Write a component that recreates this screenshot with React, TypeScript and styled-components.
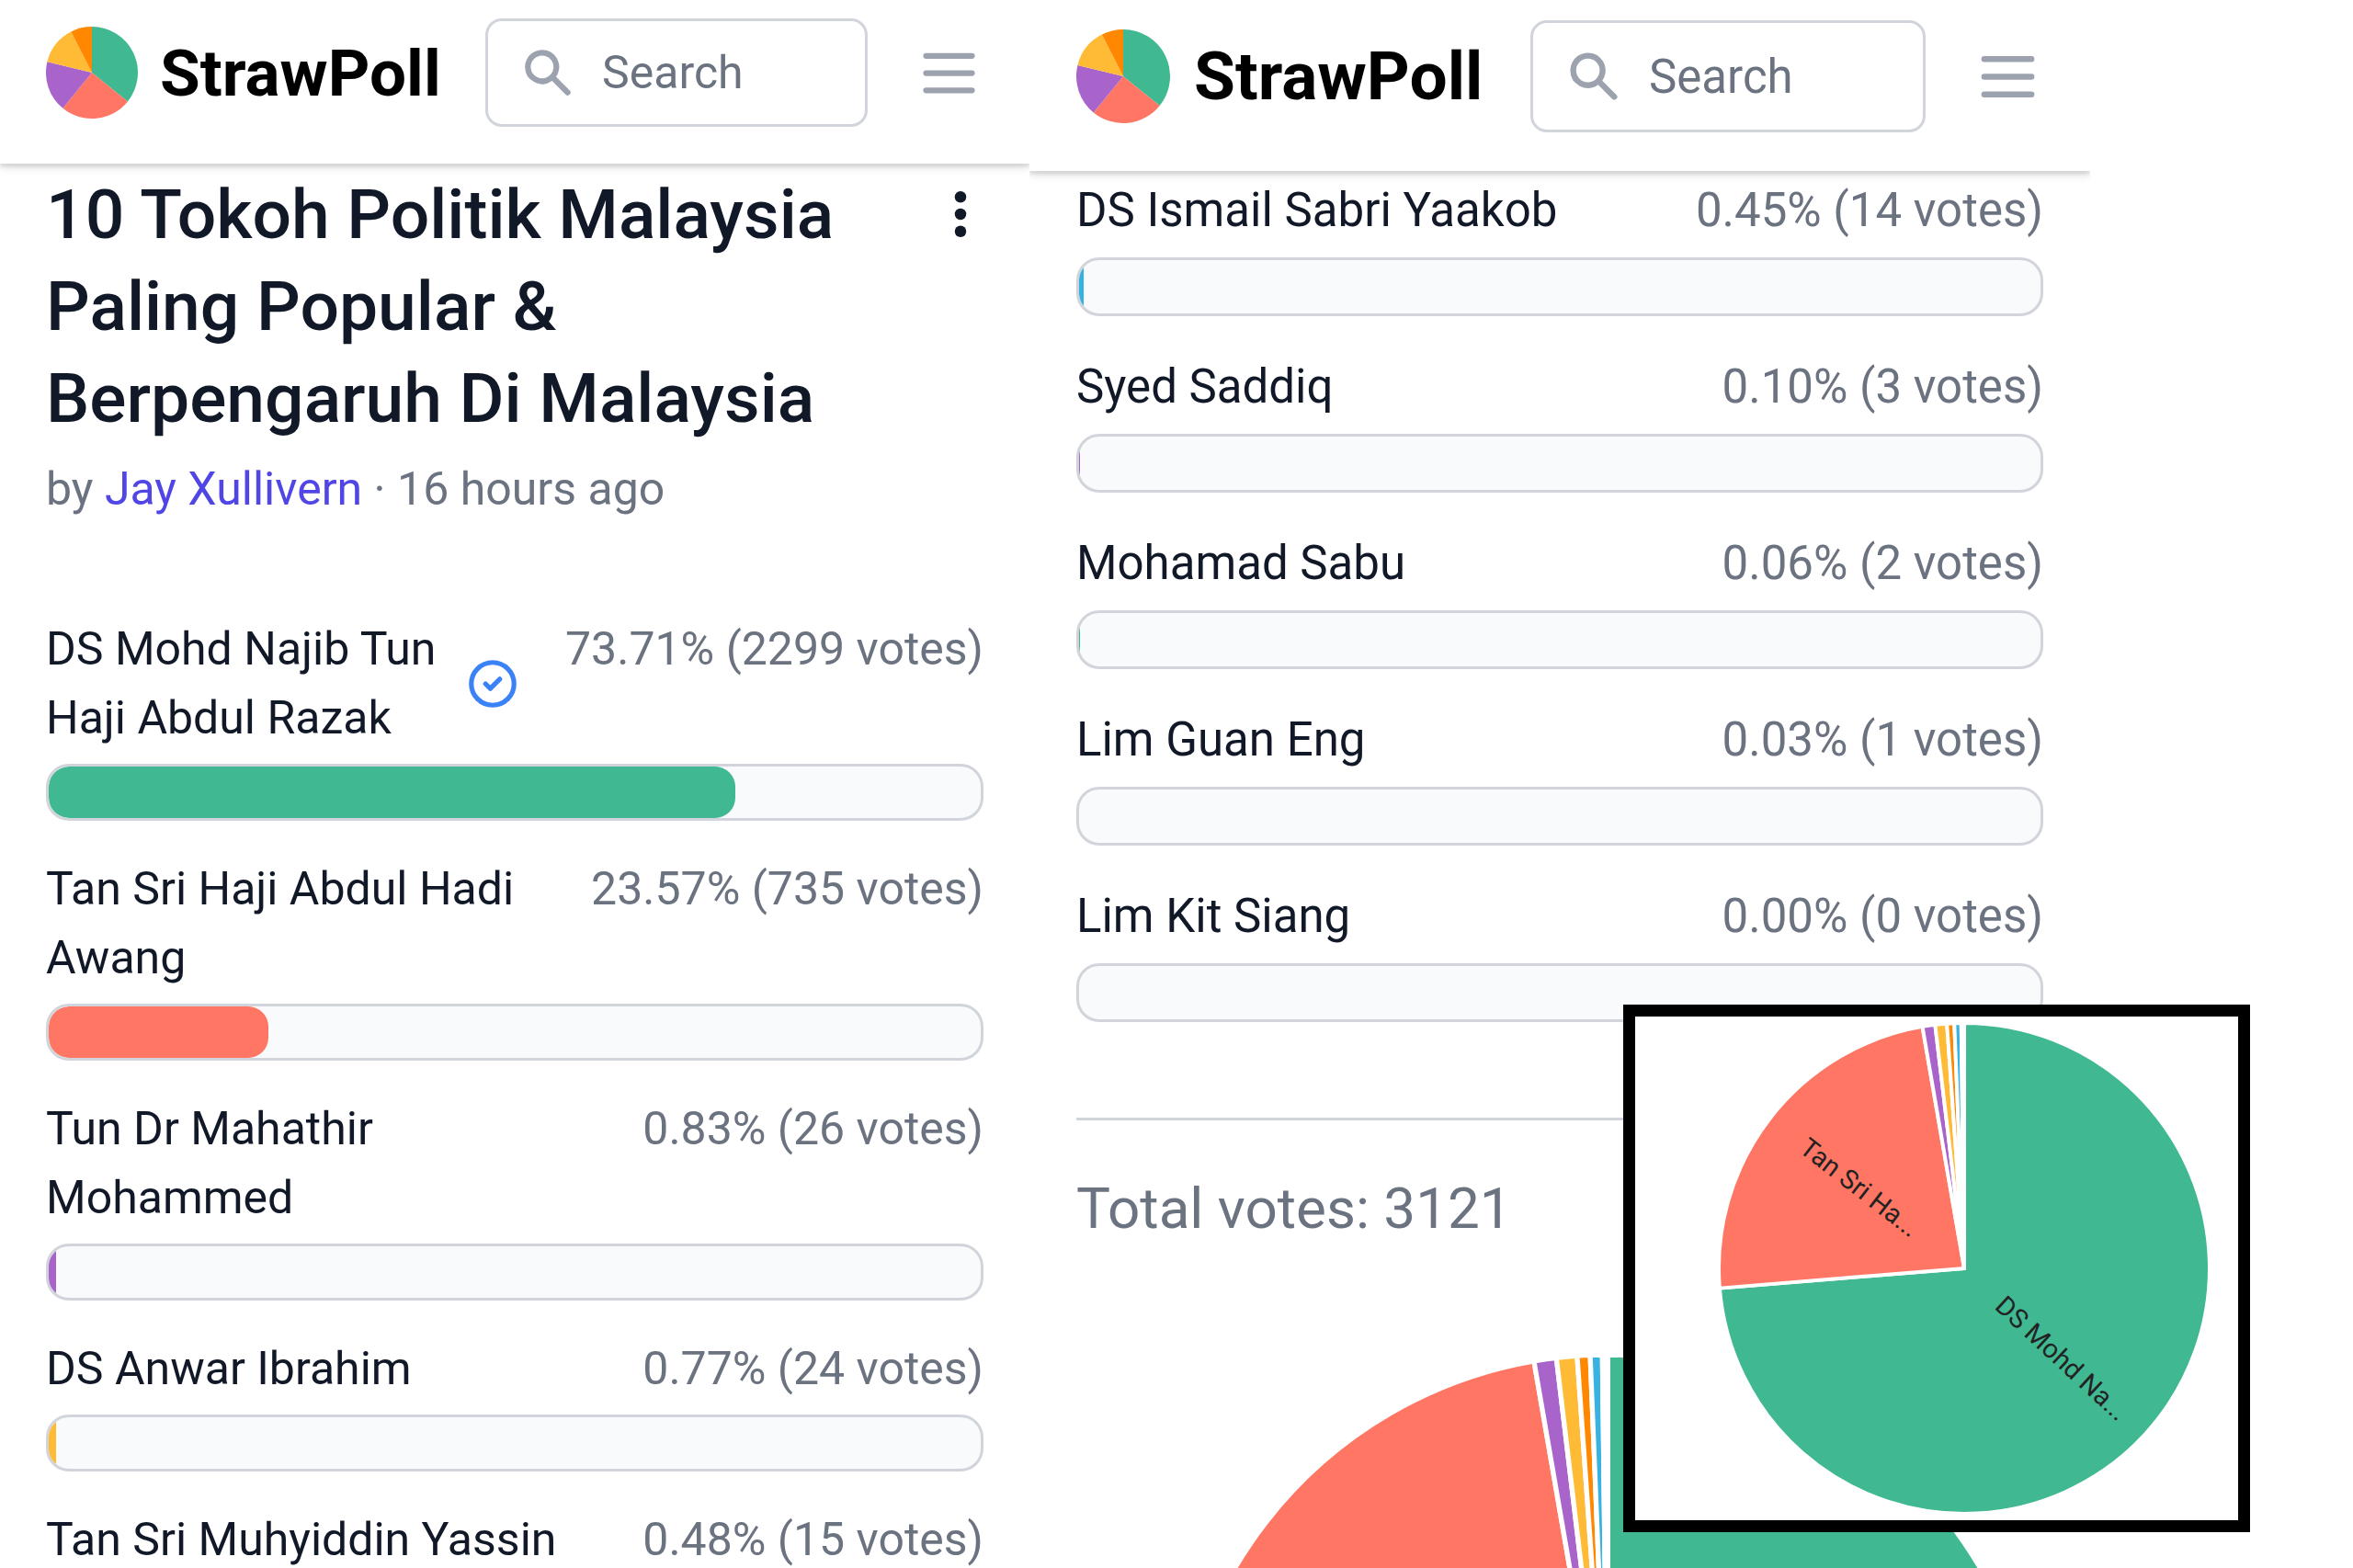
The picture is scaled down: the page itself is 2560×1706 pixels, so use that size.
import React from "react";
import styled, { createGlobalStyle, ThemeProvider } from "styled-components";

const GlobalStyle = createGlobalStyle`
  *, *::before, *::after { box-sizing: border-box; }
  body {
    margin: 0;
    background: #ffffff;
    font-family: Roboto, "Liberation Sans", sans-serif;
    color: #111827;
  }
  h1, p, ul { margin: 0; padding: 0; }
`;

const small = {
  text: 50, line: 75, brand: 71, brandGap: 24, logo: 100, pad: 50, headerTop: 20, headerBottom: 40,
  search: 416, searchHeight: 118, icon: 62, menu: 75, bar: 62, barGap: 12, rowGap: 37, contentTop: 5,
};
const large = {
  text: 51, line: 77, brand: 73, brandGap: 26, logo: 102, pad: 51, headerTop: 22, headerBottom: 42,
  search: 430, searchHeight: 122, icon: 64, menu: 77, bar: 64, barGap: 13, rowGap: 38, contentTop: 4,
};
type Sizes = typeof small;
type T = { theme: any };
const px = (key: keyof Sizes) => ({ theme }: T) => `${theme[key]}px`;

const Page = styled.div`
  position: relative;
  display: grid;
  grid-template-columns: 1120fr 1154fr 286fr;
  height: 100vh;
  overflow: hidden;
`;
const Screen = styled.section`
  min-width: 0;
  overflow: hidden;
`;
const Header = styled.header`
  display: flex;
  align-items: center;
  padding: ${px("headerTop")} ${px("pad")} ${px("headerBottom")};
  box-shadow: 0 4px 3px rgba(0, 0, 0, 0.08), 0 4px 10px rgba(0, 0, 0, 0.12);
`;
const Brand = styled.a`
  display: flex;
  align-items: center;
  gap: ${px("brandGap")};
  font-size: ${px("brand")};
  font-weight: 700;
  line-height: 1;
  color: #000000;
  text-decoration: none;
`;
const LogoMark = styled.svg`
  width: ${px("logo")};
  height: ${px("logo")};
`;
const SearchBox = styled.label`
  display: flex;
  align-items: center;
  gap: 28px;
  width: ${px("search")};
  height: ${px("searchHeight")};
  margin-left: auto;
  padding: 0 34px;
  border: 3px solid #d1d5db;
  border-radius: 18px;
`;
const SearchIcon = styled.svg`
  flex: none;
  width: ${px("icon")};
  height: ${px("icon")};
  fill: #9ca3af;
`;
const SearchInput = styled.input`
  flex: 1;
  min-width: 0;
  padding: 0;
  border: 0;
  outline: 0;
  background: transparent;
  font: inherit;
  font-size: ${px("text")};
  &::placeholder { color: #6b7280; opacity: 1; }
`;
const IconButton = styled.button`
  display: flex;
  padding: 0;
  border: 0;
  background: transparent;
  color: #111827;
`;
const MenuButton = styled(IconButton)`
  margin-left: 51px;
  color: #9ca3af;
`;
const MenuIcon = styled.svg`
  width: ${px("menu")};
  height: ${px("menu")};
`;
const Content = styled.main`
  padding: ${px("contentTop")} ${px("pad")} 0;
`;
const TitleRow = styled.div`
  display: flex;
  align-items: flex-start;
  gap: 50px;
`;
const Title = styled.h1`
  flex: 1;
  font-size: 75px;
  line-height: 100px;
  font-weight: 500;
`;
const MoreButton = styled(IconButton)`
  padding: 25px 0;
`;
const Byline = styled.p`
  margin: 12px 0 99px;
  font-size: ${px("text")};
  line-height: ${px("line")};
  color: #6b7280;
`;
const Author = styled.a`
  color: #4f46e5;
  text-decoration: none;
`;
const Results = styled.ul`
  display: flex;
  flex-direction: column;
  gap: ${px("rowGap")};
  list-style: none;
`;
const Result = styled.li`
  display: flex;
  flex-direction: column;
  gap: ${px("barGap")};
`;
const ResultHead = styled.div`
  display: flex;
  justify-content: space-between;
  gap: 48px;
  font-size: ${px("text")};
  line-height: ${px("line")};
`;
const Choice = styled.div`
  display: flex;
  align-items: center;
  gap: 25px;
`;
const Votes = styled.span`
  flex: none;
  color: #6b7280;
`;
const Track = styled.div`
  height: ${px("bar")};
  overflow: hidden;
  border: 3px solid #d1d5db;
  border-radius: 25px;
  background: #f9fafb;
`;
const Fill = styled.div<{ $color: string; $rounded: boolean }>`
  height: 100%;
  border-radius: ${(p) => (p.$rounded ? "22px" : "0")};
  background: ${(p) => p.$color};
`;
const Divider = styled.hr`
  height: 3px;
  margin: 104px 0 51px;
  border: 0;
  background: #d1d5db;
`;
const Total = styled.p`
  font-size: 62px;
  line-height: 90px;
  color: #6b7280;
`;
const ChartArea = styled.div`
  display: flex;
  justify-content: flex-end;
  margin-top: 114px;
  padding-right: 4px;
`;
const ChartInset = styled.figure`
  position: absolute;
  top: 1093px;
  left: 69%;
  display: flex;
  justify-content: center;
  width: 682px;
  height: 574px;
  margin: 0;
  padding: 7px 0 0 60px;
  border: 13px solid #000000;
  background: #ffffff;
`;
const PieLabel = styled.text`
  font-size: 29px;
  fill: #222222;
`;

const colors = ["#40b892", "#ff7664", "#a864cb", "#ffbb36", "#ff8800", "#38b2e0", "#a864cb", "#40b892", "#ff7664", "#ffbb36"];
const counts = [2299, 735, 26, 24, 15, 14, 3, 2, 1, 0];

function point(turn: number, r: number) {
  const a = turn * 2 * Math.PI;
  return [r * Math.sin(a), -r * Math.cos(a)];
}
function wedge(from: number, to: number, r: number) {
  const [x1, y1] = point(from, r);
  const [x2, y2] = point(to, r);
  return `M0 0L${x1} ${y1}A${r} ${r} 0 ${to - from > 0.5 ? 1 : 0} 1 ${x2} ${y2}Z`;
}

function Pie({ size, gap, labels = [] }: { size: number; gap: number; labels?: string[] }) {
  const total = counts.reduce((a, b) => a + b, 0);
  let start = 0;
  const slices = counts.map((n, i) => {
    const from = start;
    start += n / total;
    return { from, to: start, color: colors[i] };
  });
  return (
    <svg width={size} height={size} viewBox="-268 -268 536 536" role="img" aria-label="Poll results">
      {slices.map((s, i) => (
        <path key={i} d={wedge(s.from, s.to, 268)} fill={s.color} stroke="#ffffff" strokeWidth={gap} strokeLinejoin="round" />
      ))}
      {labels.map((label, i) => {
        const turn = (slices[i].from + slices[i].to) / 2;
        const flipped = turn > 0.5;
        return (
          <PieLabel
            key={label}
            x={flipped ? -222 : 237}
            dominantBaseline="central"
            textAnchor={flipped ? "start" : "end"}
            transform={`rotate(${turn * 360 - (flipped ? 270 : 90)})`}
          >
            {label}
          </PieLabel>
        );
      })}
    </svg>
  );
}

const logoSlices: [number, number, string][] = [
  [0, 0.358, "#40b892"], [0.358, 0.609, "#ff7664"], [0.609, 0.788, "#a864cb"], [0.788, 0.925, "#ffbb36"], [0.925, 1, "#ff8800"],
];

function TopBar() {
  return (
    <Header>
      <Brand href="#">
        <LogoMark viewBox="-50 -50 100 100" aria-hidden="true">
          {logoSlices.map(([from, to, color]) => (
            <path key={color} d={wedge(from, to, 50)} fill={color} />
          ))}
        </LogoMark>
        StrawPoll
      </Brand>
      <SearchBox>
        <SearchIcon viewBox="0 0 20 20" aria-hidden="true">
          <path fillRule="evenodd" d="M8 4a4 4 0 100 8 4 4 0 000-8zM2 8a6 6 0 1110.89 3.476l4.817 4.817a1 1 0 01-1.414 1.414l-4.816-4.816A6 6 0 012 8z" />
        </SearchIcon>
        <SearchInput type="search" placeholder="Search" aria-label="Search" />
      </SearchBox>
      <MenuButton type="button" aria-label="Menu">
        <MenuIcon viewBox="0 0 24 24" fill="none" stroke="currentColor" strokeWidth="2" strokeLinecap="round">
          <path d="M4 6h16M4 12h16M4 18h16" />
        </MenuIcon>
      </MenuButton>
    </Header>
  );
}

type Row = { name: string; percent: string; votes: number; color: string; verified?: boolean };

function ResultList({ rows }: { rows: Row[] }) {
  return (
    <Results>
      {rows.map((row) => (
        <Result key={row.name}>
          <ResultHead>
            <Choice>
              <span>{row.name}</span>
              {row.verified && (
                <SelectedIcon viewBox="0 0 24 24" aria-label="Your vote">
                  <path d="M9 12l2 2 4-4m6 2a9 9 0 11-18 0 9 9 0 0118 0z" />
                </SelectedIcon>
              )}
            </Choice>
            <Votes>{`${row.percent}% (${row.votes} votes)`}</Votes>
          </ResultHead>
          <Track>
            <Fill
              $color={row.color}
              $rounded={Number(row.percent) > 5}
              style={{ width: `${Number(row.percent).toFixed(1)}%` }}
            />
          </Track>
        </Result>
      ))}
    </Results>
  );
}

const SelectedIcon = styled.svg`
  flex: none;
  width: ${px("icon")};
  height: ${px("icon")};
  fill: none;
  stroke: #3b82f6;
  stroke-width: 2;
  stroke-linecap: round;
  stroke-linejoin: round;
`;

const leaders: Row[] = [
  { name: "DS Mohd Najib Tun Haji Abdul Razak", percent: "73.71", votes: 2299, color: colors[0], verified: true },
  { name: "Tan Sri Haji Abdul Hadi Awang", percent: "23.57", votes: 735, color: colors[1] },
  { name: "Tun Dr Mahathir Mohammed", percent: "0.83", votes: 26, color: colors[2] },
  { name: "DS Anwar Ibrahim", percent: "0.77", votes: 24, color: colors[3] },
  { name: "Tan Sri Muhyiddin Yassin", percent: "0.48", votes: 15, color: colors[4] },
];
const others: Row[] = [
  { name: "DS Ismail Sabri Yaakob", percent: "0.45", votes: 14, color: colors[5] },
  { name: "Syed Saddiq", percent: "0.10", votes: 3, color: colors[6] },
  { name: "Mohamad Sabu", percent: "0.06", votes: 2, color: colors[7] },
  { name: "Lim Guan Eng", percent: "0.03", votes: 1, color: colors[8] },
  { name: "Lim Kit Siang", percent: "0.00", votes: 0, color: colors[9] },
];

export default function App() {
  return (
    <Page>
      <GlobalStyle />
      <ThemeProvider theme={small}>
        <Screen>
          <TopBar />
          <Content>
            <TitleRow>
              <Title>10 Tokoh Politik Malaysia Paling Popular &amp; Berpengaruh Di Malaysia</Title>
              <MoreButton type="button" aria-label="More options">
                <svg width="50" height="50" viewBox="0 0 16 16" fill="currentColor">
                  <circle cx="8" cy="2" r="2" />
                  <circle cx="8" cy="8" r="2" />
                  <circle cx="8" cy="14" r="2" />
                </svg>
              </MoreButton>
            </TitleRow>
            <Byline>
              by <Author href="#">Jay Xullivern</Author> · 16 hours ago
            </Byline>
            <ResultList rows={leaders} />
          </Content>
        </Screen>
      </ThemeProvider>
      <ThemeProvider theme={large}>
        <Screen>
          <TopBar />
          <Content>
            <ResultList rows={others} />
            <Divider />
            <Total>Total votes: 3121</Total>
            <ChartArea>
              <Pie size={940} gap={3} />
            </ChartArea>
          </Content>
        </Screen>
      </ThemeProvider>
      <ChartInset>
        <Pie size={534} gap={4} labels={["DS Mohd Na...", "Tan Sri Ha..."]} />
      </ChartInset>
    </Page>
  );
}
